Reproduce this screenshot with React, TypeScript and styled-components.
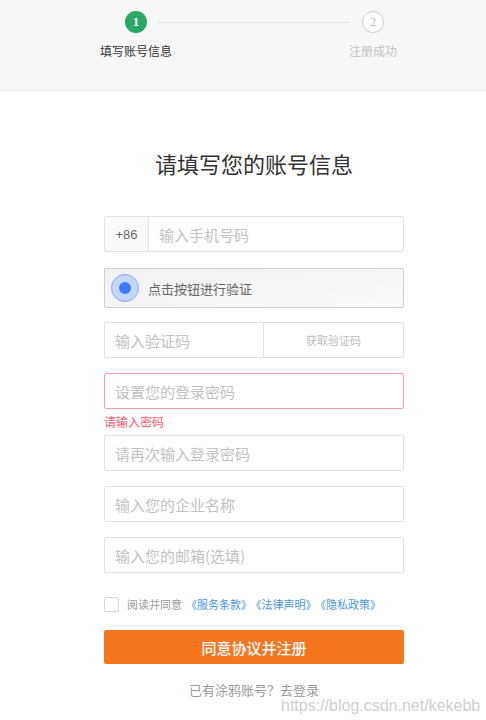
import React from "react";
import styled, { createGlobalStyle } from "styled-components";

const Global = createGlobalStyle`
  html, body { margin: 0; padding: 0; background: #fff; }
  body { font-family: "Noto Sans CJK SC", "Noto Sans", sans-serif; color: #333; }
  * { box-sizing: border-box; }
`;

const Page = styled.div`
  position: relative;
  width: 486px;
  height: 720px;
  overflow: hidden;
  background: #fff;
`;

const Header = styled.header`
  height: 91px;
  background: #f7f7f7;
  border-bottom: 1px solid #ececec;
  padding: 11px 0 0 115px;
`;

const Steps = styled.div`
  display: flex;
  align-items: flex-start;
`;

const Step = styled.div<{ $w: number }>`
  width: ${(p) => p.$w}px;
  display: flex;
  flex-direction: column;
  align-items: center;
`;

const Circle = styled.div<{ $active?: boolean }>`
  width: 22px;
  height: 22px;
  border-radius: 50%;
  display: flex;
  align-items: center;
  justify-content: center;
  font-family: "Liberation Serif", serif;
  font-size: 13px;
  font-weight: ${(p) => (p.$active ? 700 : 400)};
  color: ${(p) => (p.$active ? "#fff" : "#bbb")};
  background: ${(p) => (p.$active ? "#2aa764" : "#fff")};
  border: ${(p) => (p.$active ? "none" : "1px solid #cfcfcf")};
`;

const StepLabel = styled.div<{ $active?: boolean }>`
  margin-top: 10px;
  white-space: nowrap;
  font-size: 12px;
  line-height: 16px;
  color: ${(p) => (p.$active ? "#333" : "#c4c4c4")};
`;

const Connector = styled.div`
  width: 192px;
  height: 1px;
  margin-top: 11px;
  background: #e2e2e2;
`;

const Main = styled.main`
  padding-left: 22px;
  display: flex;
  flex-direction: column;
  align-items: center;
`;

const Title = styled.h1`
  margin: 57px 0 0;
  font-size: 22px;
  font-weight: 400;
  line-height: 30px;
  color: #333;
`;

const Form = styled.form`
  width: 300px;
  display: flex;
  flex-direction: column;
`;

const Field = styled.div<{ $mt: number; $error?: boolean; $h?: number }>`
  margin-top: ${(p) => p.$mt}px;
  height: ${(p) => p.$h ?? 36}px;
  display: flex;
  border: 1px solid ${(p) => (p.$error ? "#ff9a9f" : "#e2e2e2")};
  border-radius: 2px;
  background: #fff;
  overflow: hidden;
`;

const Prefix = styled.div`
  width: 44px;
  flex: none;
  display: flex;
  align-items: center;
  justify-content: center;
  background: #fafafa;
  border-right: 1px solid #e2e2e2;
  font-family: "Liberation Sans", "Noto Sans CJK SC", sans-serif;
  font-size: 13px;
  color: #666;
`;

const Input = styled.input`
  flex: 1;
  min-width: 0;
  border: none;
  outline: none;
  background: transparent;
  padding: 0 10px;
  font-family: "Noto Sans CJK SC", sans-serif;
  font-size: 15px;
  color: #333;
  &::placeholder { color: #c2c2c2; }
`;

const CodeButton = styled.button`
  width: 140px;
  flex: none;
  border: none;
  border-left: 1px solid #e2e2e2;
  background: #fff;
  font-family: "Noto Sans CJK SC", sans-serif;
  font-size: 11px;
  color: #bdbdbd;
  padding: 0;
`;

const Verify = styled.div`
  margin-top: 16px;
  height: 40px;
  display: flex;
  align-items: center;
  padding-left: 6px;
  gap: 9px;
  border: 1px solid #cfcfcf;
  border-radius: 2px;
  background: linear-gradient(170deg, #f1f1f1 0%, #f6f6f6 60%, #fbfbfb 100%);
  font-size: 13px;
  color: #666;
`;

const Knob = styled.div`
  width: 28px;
  height: 28px;
  border-radius: 50%;
  background: #c5d7ff;
  border: 1px solid #86aaff;
  display: flex;
  align-items: center;
  justify-content: center;
  &::after {
    content: "";
    width: 12px;
    height: 12px;
    border-radius: 50%;
    background: #3b79ff;
  }
`;

const ErrorText = styled.div`
  height: 26px;
  padding-top: 5px;
  font-size: 12px;
  line-height: 16px;
  color: #ff5a6a;
`;

const AgreeRow = styled.label`
  margin-top: 23px;
  display: flex;
  align-items: center;
  gap: 8px;
  font-size: 11px;
  color: #9a9a9a;
  line-height: 16px;
`;

const Box = styled.span`
  width: 15px;
  height: 15px;
  border: 1px solid #d6d6d6;
  border-radius: 2px;
  background: #fff;
`;

const Link = styled.a`
  margin-left: 4px;
  color: #4a95e0;
  text-decoration: none;
`;

const Submit = styled.button`
  margin-top: 18px;
  height: 34px;
  border: none;
  border-radius: 2px;
  background: #f5761f;
  color: #fff;
  font-family: "Noto Sans CJK SC", sans-serif;
  font-size: 15px;
  font-weight: 500;
  padding: 0;
`;

const LoginHint = styled.div`
  margin-top: 17px;
  text-align: center;
  font-size: 13px;
  line-height: 18px;
  color: #9a9a9a;
`;

const Watermark = styled.div`
  position: absolute;
  left: 281px;
  top: 696px;
  font-family: "Liberation Sans", sans-serif;
  font-size: 16px;
  line-height: 20px;
  color: #cfcfcf;
  text-shadow: 0 0 2px #fff, 0 0 1px #fff;
  pointer-events: none;
`;

export default function App() {
  return (
    <Page>
      <Global />
      <Header>
        <Steps>
          <Step $w={42}>
            <Circle $active>1</Circle>
            <StepLabel $active>填写账号信息</StepLabel>
          </Step>
          <Connector />
          <Step $w={48}>
            <Circle>2</Circle>
            <StepLabel>注册成功</StepLabel>
          </Step>
        </Steps>
      </Header>
      <Main>
        <Title>请填写您的账号信息</Title>
        <Form onSubmit={(e) => e.preventDefault()}>
          <Field $mt={38}>
            <Prefix>+86</Prefix>
            <Input placeholder="输入手机号码" />
          </Field>
          <Verify>
            <Knob />
            <span>点击按钮进行验证</span>
          </Verify>
          <Field $mt={14}>
            <Input placeholder="输入验证码" />
            <CodeButton type="button">获取验证码</CodeButton>
          </Field>
          <Field $mt={15} $error>
            <Input type="password" placeholder="设置您的登录密码" />
          </Field>
          <ErrorText>请输入密码</ErrorText>
          <Field $mt={0}>
            <Input type="password" placeholder="请再次输入登录密码" />
          </Field>
          <Field $mt={15}>
            <Input placeholder="输入您的企业名称" />
          </Field>
          <Field $mt={15}>
            <Input placeholder="输入您的邮箱(选填)" />
          </Field>
          <AgreeRow>
            <Box />
            <span>
              阅读并同意<Link href="#">《服务条款》</Link>
              <Link href="#">《法律声明》</Link>
              <Link href="#">《隐私政策》</Link>
            </span>
          </AgreeRow>
          <Submit type="submit">同意协议并注册</Submit>
          <LoginHint>已有涂鸦账号？去登录</LoginHint>
        </Form>
      </Main>
      <Watermark>https://blog.csdn.net/kekebb</Watermark>
    </Page>
  );
}
